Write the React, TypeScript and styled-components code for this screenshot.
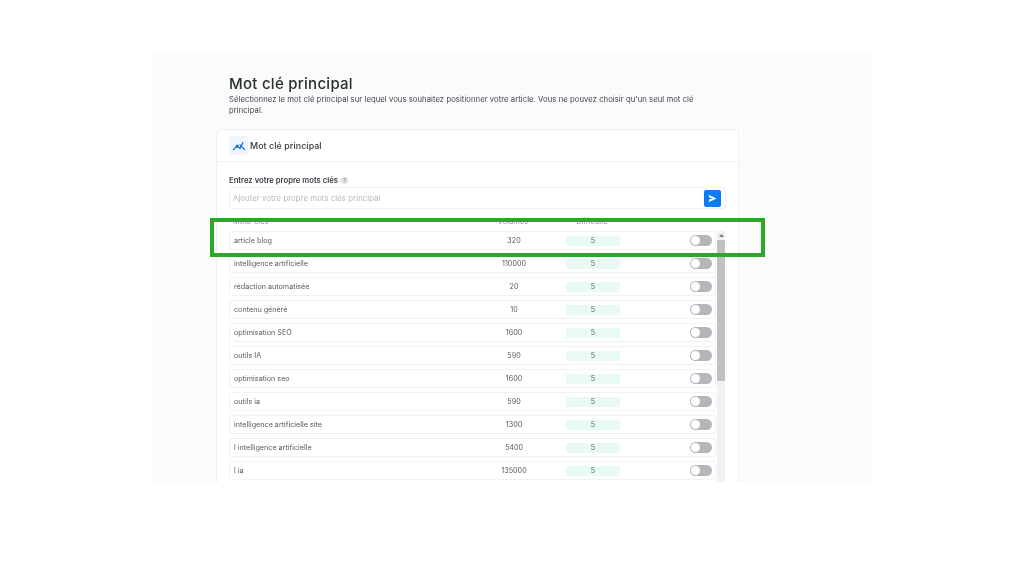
import React from "react";
import styled, { createGlobalStyle } from "styled-components";

const GlobalStyle = createGlobalStyle`
  html, body {
    margin: 0;
    padding: 0;
    background: #ffffff;
    font-family: "Inter", "Open Sans", sans-serif;
  }
  #root {
    width: 1024px;
    height: 576px;
    overflow: hidden;
  }
`;

const Stage = styled.div`
  position: relative;
  width: 1024px;
  height: 576px;
  padding: 54px 152px 94px;
  box-sizing: border-box;
`;

const Panel = styled.main`
  height: 100%;
  background: #fbfbfc;
  padding: 20px 133px 0 64px;
  box-sizing: border-box;
  overflow: hidden;
  filter: blur(0.3px);
`;

const Intro = styled.header`
  padding-left: 13px;
  height: 55px;
`;

const Title = styled.h1`
  margin: 0;
  font-size: 15px;
  line-height: 19px;
  font-weight: 500;
  letter-spacing: 0.27px;
  color: #27302f;
`;

const Lead = styled.p`
  margin: 1px 0 0;
  width: 475px;
  font-size: 7.7px;
  line-height: 11.4px;
  letter-spacing: 0.05px;
  color: #3f4650;
`;

const Card = styled.section`
  height: 360px;
  background: #ffffff;
  border: 1px solid #f0f0f2;
  border-bottom: none;
  border-radius: 5px 5px 0 0;
`;

const CardHead = styled.div`
  display: flex;
  align-items: center;
  gap: 2px;
  height: 31px;
  padding: 0 12px;
  border-bottom: 1px solid #f0f0f2;
`;

const IconTile = styled.span`
  display: flex;
  align-items: center;
  justify-content: center;
  width: 19px;
  height: 19px;
  border-radius: 3px;
  background: #eef5fc;
`;

const CardTitle = styled.span`
  font-size: 8.8px;
  font-weight: 500;
  letter-spacing: 0.1px;
  color: #33393f;
`;

const CardBody = styled.div`
  padding: 12px 12px 0;
`;

const FieldLabel = styled.label`
  display: flex;
  align-items: center;
  gap: 3px;
  height: 12px;
  font-size: 7.7px;
  font-weight: 600;
  color: #3a4046;
`;

const Hint = styled.span`
  display: flex;
  align-items: center;
  justify-content: center;
  width: 7px;
  height: 7px;
  border-radius: 50%;
  background: #dfe1e3;
  color: #8c9096;
  font-size: 5px;
`;

const InputBar = styled.div`
  display: flex;
  align-items: center;
  justify-content: space-between;
  width: 497px;
  height: 22px;
  margin-top: 1px;
  padding: 0 4px 0 3px;
  box-sizing: border-box;
  border: 1px solid #f0f0f2;
  border-radius: 3px;
`;

const Placeholder = styled.span`
  font-size: 7.7px;
  letter-spacing: 0.1px;
  color: #b4b7bc;
`;

const SendButton = styled.button`
  display: flex;
  align-items: center;
  justify-content: center;
  width: 17px;
  height: 17px;
  padding: 0;
  border: none;
  border-radius: 2px;
  background: #0b7bf5;
`;

const columns = `
  display: grid;
  grid-template-columns: 228px 80px 54px 80px;
  column-gap: 12px;
  align-items: center;
  padding-left: 4px;
`;

const HeadRow = styled.div`
  ${columns}
  height: 14px;
  margin-top: 5px;
  font-size: 7.5px;
  color: #8b8f94;
`;

const Centered = styled.span`
  text-align: center;
`;

const ListArea = styled.div`
  display: flex;
  align-items: flex-start;
  gap: 1px;
  width: 497px;
  margin-top: 3px;
`;

const Rows = styled.div`
  display: flex;
  flex-direction: column;
  gap: 4px;
  width: 487px;
`;

const Row = styled.div`
  ${columns}
  height: 19px;
  box-sizing: border-box;
  border: 1px solid #f1f1f3;
  border-radius: 3px;
  font-size: 7.2px;
  color: #54595e;
`;

const Score = styled.span`
  height: 10px;
  line-height: 10px;
  text-align: center;
  background: #e8faf1;
  color: #5a6a64;
`;

const Toggle = styled.span`
  justify-self: end;
  display: flex;
  align-items: center;
  width: 22px;
  height: 11px;
  border-radius: 6px;
  background: #b3b6bb;
  box-sizing: border-box;
  padding-left: 1px;
`;

const Knob = styled.span`
  width: 9px;
  height: 9px;
  border-radius: 50%;
  background: #ffffff;
`;

const ScrollTrack = styled.div`
  display: flex;
  flex-direction: column;
  width: 8px;
  height: 260px;
  background: #f1f1f1;
`;

const ScrollArrow = styled.span`
  display: flex;
  align-items: center;
  justify-content: center;
  height: 9px;
`;

const ScrollThumb = styled.span`
  display: block;
  height: 141px;
  background: #c1c1c1;
`;

const Highlight = styled.div`
  position: absolute;
  left: 210px;
  top: 218px;
  width: 555px;
  height: 39px;
  box-sizing: border-box;
  border: 4px solid #2aa827;
  pointer-events: none;
`;

const keywords: [string, number][] = [
  ["article blog", 320],
  ["intelligence artificielle", 110000],
  ["rédaction automatisée", 20],
  ["contenu généré", 10],
  ["optimisation SEO", 1600],
  ["outils IA", 590],
  ["optimisation seo", 1600],
  ["outils ia", 590],
  ["intelligence artificielle site", 1300],
  ["l intelligence artificielle", 5400],
  ["l ia", 135000],
];

export default function App() {
  return (
    <Stage>
      <GlobalStyle />
      <Panel>
        <Intro>
          <Title>Mot clé principal</Title>
          <Lead>
            Sélectionnez le mot clé principal sur lequel vous souhaitez positionner votre article. Vous ne pouvez choisir qu'un seul mot clé principal.
          </Lead>
        </Intro>
        <Card>
          <CardHead>
            <IconTile>
              <svg width="13" height="13" viewBox="0 0 13 13" fill="none" stroke="#1f6fd0" strokeWidth="1.2" strokeLinecap="round">
                <path d="M1.5 10.5 5 7l3 2.5 3-6" />
                <path d="M8 6l4.5 4.5" />
                <circle cx="5.2" cy="7.2" r="1" fill="#1f6fd0" />
              </svg>
            </IconTile>
            <CardTitle>Mot clé principal</CardTitle>
          </CardHead>
          <CardBody>
            <FieldLabel>
              Entrez votre propre mots clés <Hint>?</Hint>
            </FieldLabel>
            <InputBar>
              <Placeholder>Ajouter votre propre mots clés principal</Placeholder>
              <SendButton aria-label="Envoyer">
                <svg width="9" height="9" viewBox="0 0 9 9">
                  <path d="M0.5 0.8 8.6 4.5 0.5 8.2 1.4 5.2 5 4.5 1.4 3.8Z" fill="#ffffff" />
                </svg>
              </SendButton>
            </InputBar>
            <HeadRow>
              <span>Mots-clés</span>
              <Centered>Volumes</Centered>
              <Centered>Difficulté</Centered>
            </HeadRow>
            <ListArea>
              <Rows>
                {keywords.map(([word, volume]) => (
                  <Row key={word}>
                    <span>{word}</span>
                    <Centered>{volume}</Centered>
                    <Score>5</Score>
                    <Toggle>
                      <Knob />
                    </Toggle>
                  </Row>
                ))}
              </Rows>
              <ScrollTrack>
                <ScrollArrow>
                  <svg width="5" height="3" viewBox="0 0 5 3">
                    <path d="M2.5 0 5 3H0Z" fill="#7d7d7d" />
                  </svg>
                </ScrollArrow>
                <ScrollThumb />
              </ScrollTrack>
            </ListArea>
          </CardBody>
        </Card>
      </Panel>
      <Highlight />
    </Stage>
  );
}
